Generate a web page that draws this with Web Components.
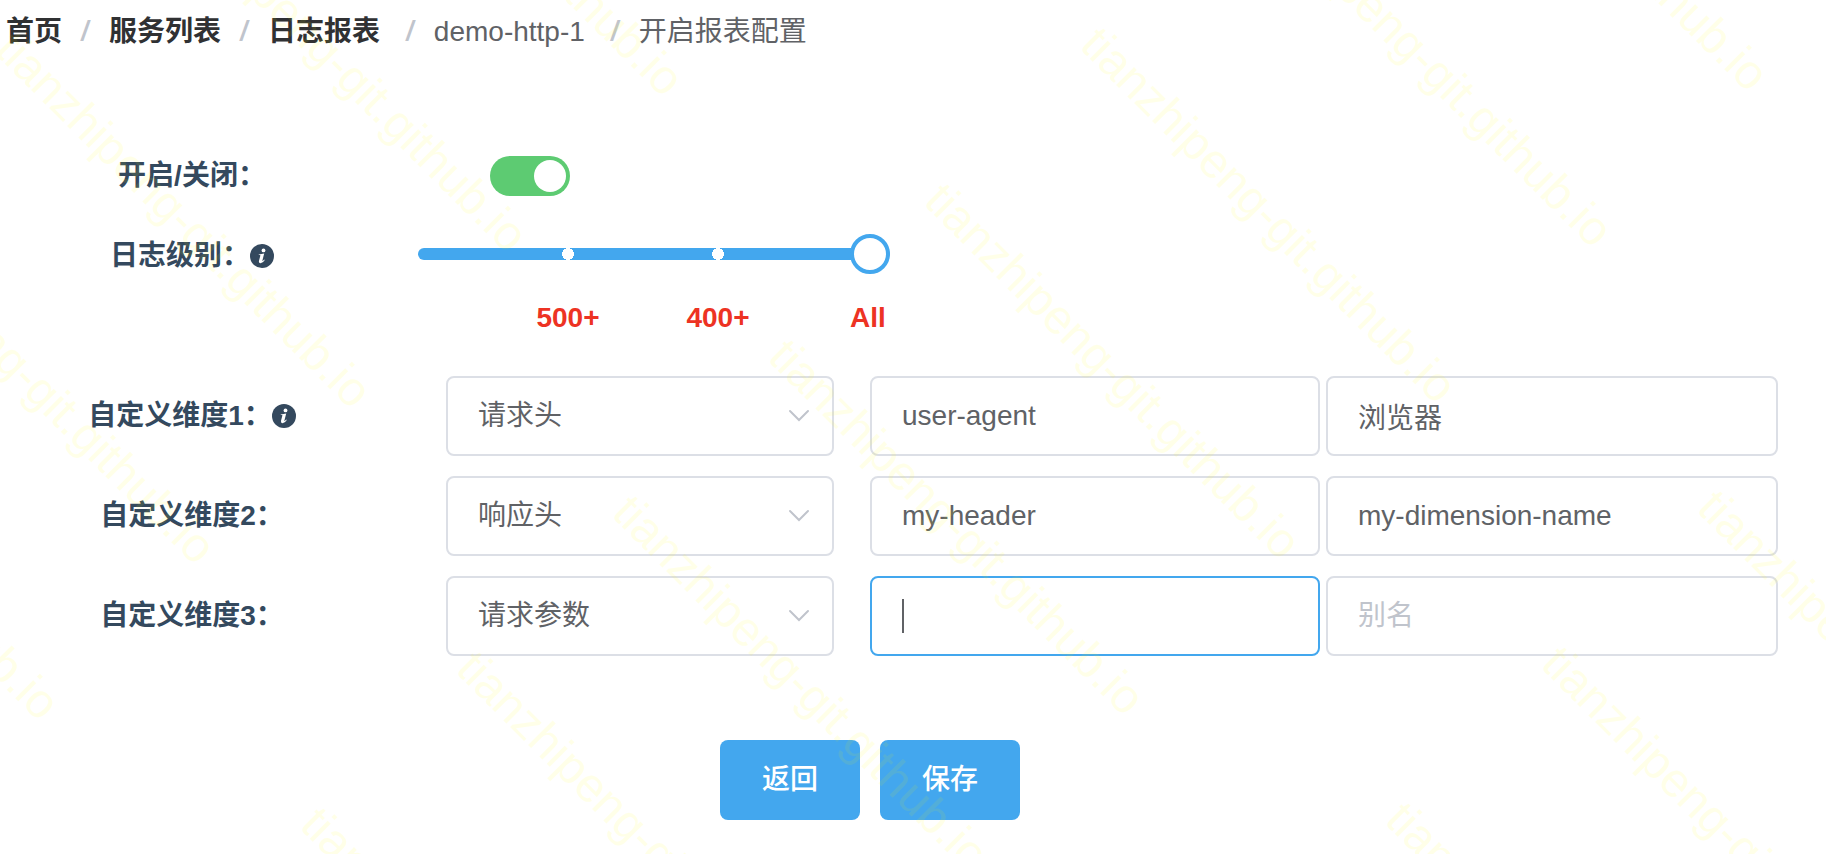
<!DOCTYPE html>
<html lang="zh-CN">
<head>
<meta charset="utf-8">
<meta name="viewport" content="width=device-width, initial-scale=1">
<title>开启报表配置</title>
<style>
  html, body { margin: 0; }
  body {
    min-height: 100vh;
    background: #fff;
    color: #606266;
    font: 28px/40px "Liberation Sans", "Noto Sans CJK SC", sans-serif;
  }
</style>
</head>
<body>
<report-settings></report-settings>

<script>
const rowStyles = `
  :host { display: grid; grid-template-columns: 384px minmax(0, 1fr); }
  .label {
    display: flex; align-items: center; justify-content: center;
    height: 80px; color: #34495e; font-weight: 700; white-space: nowrap;
  }
`;

function define(name, html, setup) {
  const template = document.createElement('template');
  template.innerHTML = html;
  customElements.define(name, class extends HTMLElement {
    constructor() {
      super();
      this.attachShadow({ mode: 'open' }).append(template.content.cloneNode(true));
    }
    connectedCallback() {
      if (setup && !this.ready) { this.ready = true; setup(this, this.shadowRoot); }
    }
  });
}

define('info-icon', `
  <style>
    :host { display: block; width: 24px; height: 24px; }
    svg { display: block; }
  </style>
  <svg width="24" height="24" viewBox="0 0 24 24" role="img" aria-label="说明">
    <circle cx="12" cy="12" r="12" fill="#34495e"/>
    <circle cx="13.5" cy="6.4" r="1.9" fill="#fff"/>
    <path d="M8.8 10.4 L14.2 9.4 L12.4 16.4 Q12.3 17.2 13 16.8 L14.2 15.4 L14.8 15.9 Q12.8 19.3 10.4 19.2 Q8.5 19 9 16.8 L10.4 11.6 Q10.5 11 9.8 11 L8.7 11.1 Z" fill="#fff"/>
  </svg>`);

define('crumb-item', `
  <style>
    :host { display: flex; align-items: baseline; }
    a { color: #303133; font-weight: 700; text-decoration: none; }
    .sep {
      margin: 0 18px; color: #c0c4cc; font-weight: 600;
      font-family: "Open Sans", sans-serif;
    }
    :host([current]) .sep { display: none; }
    :host([spaced]) .sep { margin-left: 25px; }
  </style>
  <span class="text"><slot></slot></span><span class="sep" aria-hidden="true">/</span>`,
  (host, root) => {
    if (!host.hasAttribute('href')) return;
    const link = document.createElement('a');
    link.href = host.getAttribute('href');
    link.append(root.querySelector('slot'));
    root.querySelector('.text').append(link);
  });

define('crumb-trail', `
  <style>
    :host { display: block; padding: 10px 6px 8px; }
    nav { display: flex; flex-wrap: wrap; align-items: baseline; }
  </style>
  <nav aria-label="面包屑"><slot></slot></nav>`);

define('switch-row', `
  <style>
    ${rowStyles}
    .control { display: flex; align-items: center; padding-left: 106px; }
    input {
      appearance: none; box-sizing: border-box; width: 80px; height: 40px; margin: 0; padding: 4px;
      border-radius: 20px; background: #dcdfe6; display: flex; cursor: pointer;
    }
    input::before { content: ""; width: 32px; height: 32px; border-radius: 50%; background: #fff; }
    input:checked { background: #5dcb72; justify-content: flex-end; }
  </style>
  <label class="label" for="enabled"><slot></slot></label>
  <div class="control"><input id="enabled" type="checkbox" role="switch" checked></div>`);

define('level-row', `
  <style>
    ${rowStyles}
    .control { padding: 18px 0 0 34px; }
    input {
      appearance: none; display: block; width: 472px; height: 40px; margin: 0; background: none; cursor: pointer;
    }
    input::-webkit-slider-runnable-track {
      height: 12px; border-radius: 6px;
      background:
        radial-gradient(circle at 150px 6px, #fff 6px, transparent 6px),
        radial-gradient(circle at 300px 6px, #fff 6px, transparent 6px),
        #43a7ee;
    }
    input::-webkit-slider-thumb {
      appearance: none; box-sizing: border-box; width: 40px; height: 40px; margin-top: -14px;
      border: 4px solid #43a7ee; border-radius: 50%; background: #fff;
    }
    .marks {
      display: grid; grid-template-columns: repeat(3, 150px); padding: 24px 0 38px 75px;
      color: #ed3323; font-weight: 700; text-align: center;
    }
  </style>
  <div class="label"><label for="level"><slot></slot></label><info-icon></info-icon></div>
  <div class="control">
    <input id="level" type="range" min="0" max="3" step="1" value="3">
    <div class="marks"><span>500+</span><span>400+</span><span>All</span></div>
  </div>`);

define('dimension-row', `
  <style>
    ${rowStyles}
    .fields { display: flex; gap: 36px; padding: 0 48px 0 62px; }
    .kind { position: relative; flex: 388 1 0; min-width: 0; }
    .pair { display: grid; grid-template-columns: minmax(0, 450fr) minmax(0, 452fr); gap: 6px; flex: 908 1 0; min-width: 0; }
    select, input {
      appearance: none; box-sizing: border-box; width: 100%; height: 80px; margin: 0; padding: 0 30px;
      border: 2px solid #dcdfe6; border-radius: 8px; outline: none; background: #fff;
      color: #606266; font: inherit;
    }
    input::placeholder { color: #c0c4cc; opacity: 1; }
    svg { position: absolute; right: 24px; top: 33px; pointer-events: none; }
    input:focus { border-color: #43a7ee; }
    :host([editing]) .source {
      border-color: #43a7ee; caret-color: transparent;
      background: linear-gradient(#606266, #606266) 30px 50% / 2px 34px no-repeat #fff;
    }
  </style>
  <div class="label"><label for="kind"><slot></slot></label></div>
  <div class="fields">
    <div class="kind">
      <select id="kind"><option>请求头</option><option>响应头</option><option>请求参数</option></select>
      <svg width="22" height="14" viewBox="0 0 22 14" fill="none" stroke="#c0c4cc" stroke-width="2" stroke-linecap="round" aria-hidden="true"><path d="M2 2 L11 11 L20 2"/></svg>
    </div>
    <div class="pair">
      <input class="source" type="text" aria-label="名称">
      <input class="alias" type="text" aria-label="别名" placeholder="别名">
    </div>
  </div>`,
  (host, root) => {
    root.querySelector('select').value = host.getAttribute('kind');
    root.querySelector('.source').value = host.getAttribute('source') || '';
    root.querySelector('.alias').value = host.getAttribute('alias') || '';
    if (host.hasAttribute('info')) root.querySelector('.label').append(document.createElement('info-icon'));
  });

define('action-button', `
  <style>
    :host { display: block; }
    button {
      height: 80px; padding: 0 42px; border: 0; border-radius: 8px; background: #43a7ee;
      color: #fff; font: inherit; font-weight: 500; cursor: pointer;
    }
  </style>
  <button type="button"><slot></slot></button>`);

define('page-watermark', `
  <style>
    :host { position: fixed; inset: 0; overflow: hidden; pointer-events: none; }
    svg { display: block; width: 100%; height: 100%; }
    text { fill: #ff0; fill-opacity: 0.09; font: 48px "Liberation Sans", sans-serif; }
  </style>
  <svg aria-hidden="true"></svg>`,
  (host, root) => {
    // Diagonal lines of text: copies step down-left within a band, bands step down-right.
    const svg = root.querySelector('svg');
    for (let band = -3; band <= 3; band++) {
      for (let step = -12; step <= 12; step++) {
        const x = 1078 + band * 617 - step * 156;
        const y = 47 + band * 463 + step * 156;
        if (x < -380 || x > innerWidth + 40 || y < -380 || y > innerHeight + 40) continue;
        const text = document.createElementNS('http://www.w3.org/2000/svg', 'text');
        text.setAttribute('transform', `translate(${x} ${y}) rotate(45)`);
        text.textContent = host.getAttribute('text');
        svg.append(text);
      }
    }
  });

define('report-settings', `
  <style>
    :host { display: block; }
    form { display: grid; padding-top: 76px; }
    .dimensions { display: grid; gap: 20px; }
    .actions { display: flex; justify-content: center; gap: 20px; padding: 84px 86px 34px 0; }
  </style>
  <crumb-trail>
    <crumb-item href="#home">首页</crumb-item>
    <crumb-item href="#services">服务列表</crumb-item>
    <crumb-item href="#reports" spaced>日志报表</crumb-item>
    <crumb-item spaced>demo-http-1</crumb-item>
    <crumb-item current>开启报表配置</crumb-item>
  </crumb-trail>
  <form>
    <switch-row>开启/关闭：</switch-row>
    <level-row>日志级别：</level-row>
    <div class="dimensions">
      <dimension-row kind="请求头" source="user-agent" alias="浏览器" info>自定义维度1：</dimension-row>
      <dimension-row kind="响应头" source="my-header" alias="my-dimension-name">自定义维度2：</dimension-row>
      <dimension-row kind="请求参数" editing>自定义维度3：</dimension-row>
    </div>
    <div class="actions">
      <action-button>返回</action-button>
      <action-button>保存</action-button>
    </div>
  </form>
  <page-watermark text="tianzhipeng-git.github.io"></page-watermark>`);
</script>
</body>
</html>
